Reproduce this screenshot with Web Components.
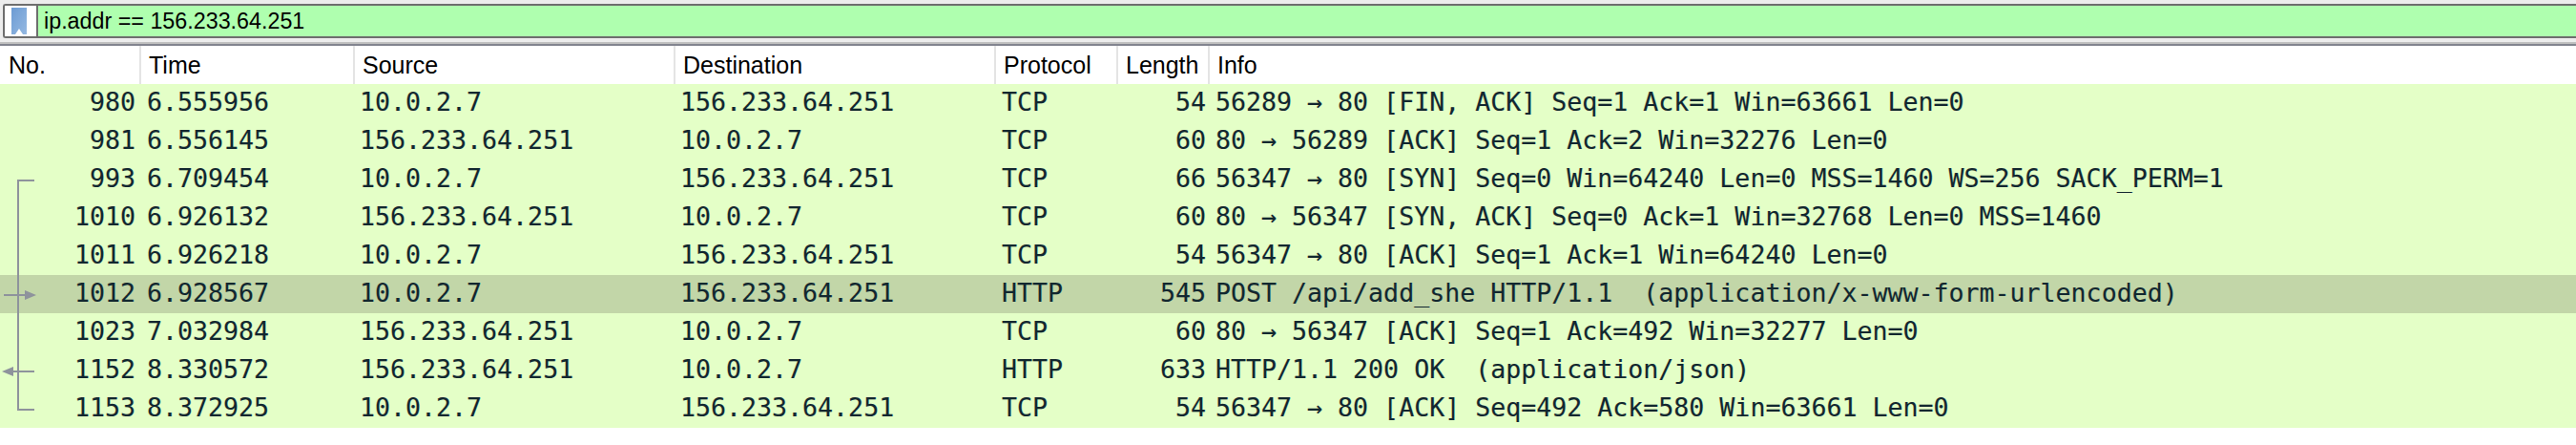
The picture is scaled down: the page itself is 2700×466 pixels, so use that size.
<!DOCTYPE html>
<html>
<head>
<meta charset="utf-8">
<style>
  html, body { margin: 0; background: #fff; }
</style>
</head>
<body>
<filter-bar>ip.addr == 156.233.64.251</filter-bar>
<packet-list></packet-list>
<script>
const filterBarTemplate = document.createElement('template');
filterBarTemplate.innerHTML = `
  <style>
    :host { display: block; height: 46px; box-sizing: border-box; padding-top: 4px; background: #ededed; border-bottom: 2px solid #c0c0c0; }
    .box { display: flex; height: 36px; box-sizing: border-box; margin-left: 3px; border: 2px solid #6e6e6e; border-right: 0; background: #afffaf; border-radius: 3px 0 0 3px; }
    .mark { width: 35px; flex: none; box-sizing: border-box; padding: 2px 0 0 7px; background: #fff; border-right: 2px solid #6e6e6e; }
    .text { padding-left: 6px; font: 23.3px/32px "Liberation Sans", sans-serif; color: #000; white-space: pre; }
    svg { display: block; }
  </style>
  <div class="box">
    <div class="mark">
      <svg width="16" height="28" viewBox="0 0 16 28">
        <defs><linearGradient id="g" x1="0" y1="0" x2="1" y2="1"><stop offset="0" stop-color="#6c9bd3"/><stop offset="1" stop-color="#95b9e2"/></linearGradient></defs>
        <path d="M0 0H16V28H12L8 22L4 28H0Z" fill="url(#g)"/>
      </svg>
    </div>
    <div class="text"><slot></slot></div>
  </div>
`;
class FilterBar extends HTMLElement {
  connectedCallback() {
    this.attachShadow({mode: 'open'}).appendChild(filterBarTemplate.content.cloneNode(true));
  }
}
customElements.define('filter-bar', FilterBar);

const columns = '148px 224px 336px 336px 128px 96px 1fr';

const headerTemplate = document.createElement('template');
headerTemplate.innerHTML = `
  <style>
    :host { display: grid; grid-template-columns: ${columns}; height: 42px; box-sizing: border-box; border-top: 2px solid #82848f; background: #fff; font: 25px/40px "Liberation Sans", sans-serif; color: #000; }
    div { padding-left: 8px; border-right: 2px solid #e4e4e4; box-sizing: border-box; }
    div:nth-child(2) { padding-left: 9px; }
    div:last-child { border-right: 0; }
  </style>
  <div>No.</div><div>Time</div><div>Source</div><div>Destination</div><div>Protocol</div><div>Length</div><div>Info</div>
`;
class PacketHeader extends HTMLElement {
  connectedCallback() {
    this.attachShadow({mode: 'open'}).appendChild(headerTemplate.content.cloneNode(true));
  }
}
customElements.define('packet-header', PacketHeader);

const rowTemplate = document.createElement('template');
rowTemplate.innerHTML = `
  <style>
    :host { display: grid; grid-template-columns: ${columns}; height: 40px; font: 26.6px/38px "DejaVu Sans Mono", monospace; color: #12272f; white-space: pre; background: #e4ffc7; text-shadow: -0.5px 0 rgba(190,120,20,.3), 0.5px 0 rgba(20,170,190,.3); }
    :host([selected]) { background: #c2d6a8; }
    div { padding-left: 5px; }
    .no, .len { padding-left: 0; text-align: right; }
    .no { padding-right: 6px; position: relative; }
    .len { padding-right: 4px; }
    #time, #proto, #info { padding-left: 6px; }
  </style>
  <div class="no"><slot name="conv"></slot><span id="no"></span></div>
  <div id="time"></div>
  <div id="src"></div>
  <div id="dst"></div>
  <div id="proto"></div>
  <div class="len" id="len"></div>
  <div id="info"></div>
`;
class PacketRow extends HTMLElement {
  connectedCallback() {
    const root = this.attachShadow({mode: 'open'});
    root.appendChild(rowTemplate.content.cloneNode(true));
    for (const key of ['no', 'time', 'src', 'dst', 'proto', 'len', 'info']) {
      root.getElementById(key).textContent = this.getAttribute(key);
    }
  }
}
customElements.define('packet-row', PacketRow);

const conv = {
  first: '<path d="M19 40V21H36" />',
  mid: '<path d="M19 0V40" />',
  req: '<path d="M19 0V40M4 21H28" /><path d="M26 16L38 21L26 26Z" fill="#8e939c" stroke="none"/>',
  res: '<path d="M19 0V40M36 21H12" /><path d="M14 16L2 21L14 26Z" fill="#8e939c" stroke="none"/>',
  last: '<path d="M19 0V21H36" />'
};

const packets = [
  [980, '6.555956', '10.0.2.7', '156.233.64.251', 'TCP', 54, '56289 → 80 [FIN, ACK] Seq=1 Ack=1 Win=63661 Len=0'],
  [981, '6.556145', '156.233.64.251', '10.0.2.7', 'TCP', 60, '80 → 56289 [ACK] Seq=1 Ack=2 Win=32276 Len=0'],
  [993, '6.709454', '10.0.2.7', '156.233.64.251', 'TCP', 66, '56347 → 80 [SYN] Seq=0 Win=64240 Len=0 MSS=1460 WS=256 SACK_PERM=1', 'first'],
  [1010, '6.926132', '156.233.64.251', '10.0.2.7', 'TCP', 60, '80 → 56347 [SYN, ACK] Seq=0 Ack=1 Win=32768 Len=0 MSS=1460', 'mid'],
  [1011, '6.926218', '10.0.2.7', '156.233.64.251', 'TCP', 54, '56347 → 80 [ACK] Seq=1 Ack=1 Win=64240 Len=0', 'mid'],
  [1012, '6.928567', '10.0.2.7', '156.233.64.251', 'HTTP', 545, 'POST /api/add_she HTTP/1.1  (application/x-www-form-urlencoded)', 'req', true],
  [1023, '7.032984', '156.233.64.251', '10.0.2.7', 'TCP', 60, '80 → 56347 [ACK] Seq=1 Ack=492 Win=32277 Len=0', 'mid'],
  [1152, '8.330572', '156.233.64.251', '10.0.2.7', 'HTTP', 633, 'HTTP/1.1 200 OK  (application/json)', 'res'],
  [1153, '8.372925', '10.0.2.7', '156.233.64.251', 'TCP', 54, '56347 → 80 [ACK] Seq=492 Ack=580 Win=63661 Len=0', 'last']
];

const listTemplate = document.createElement('template');
listTemplate.innerHTML = `
  <style>
    :host { display: block; }
  </style>
  <packet-header></packet-header>
  <slot></slot>
`;
class PacketList extends HTMLElement {
  connectedCallback() {
    this.attachShadow({mode: 'open'}).appendChild(listTemplate.content.cloneNode(true));
    for (const p of packets) {
      const row = document.createElement('packet-row');
      const keys = ['no', 'time', 'src', 'dst', 'proto', 'len', 'info'];
      keys.forEach((k, i) => row.setAttribute(k, p[i]));
      if (p[8]) row.toggleAttribute('selected', true);
      if (p[7]) {
        const span = document.createElement('span');
        span.slot = 'conv';
        span.innerHTML = `<svg width="40" height="40" viewBox="0 0 40 40" style="position:absolute;left:0;top:0" fill="none" stroke="#8e939c" stroke-width="2">${conv[p[7]]}</svg>`;
        row.appendChild(span);
      }
      this.appendChild(row);
    }
  }
}
customElements.define('packet-list', PacketList);
</script>
</body>
</html>
